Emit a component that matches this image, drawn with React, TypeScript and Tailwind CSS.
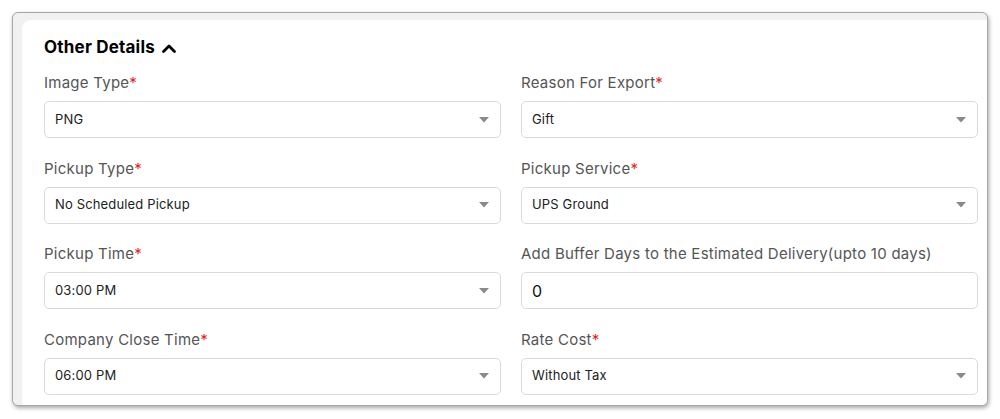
import React from "react";

const Caret = () => (
  <svg width="10" height="6" viewBox="0 0 10 6" className="shrink-0">
    <path d="M0 0 L10 0 L5 5.5 Z" fill="#8a8a8a" />
  </svg>
);

type Field = { label: string; value: string; required?: boolean; input?: boolean };

const fields: Field[] = [
  { label: "Image Type", value: "PNG", required: true },
  { label: "Reason For Export", value: "Gift", required: true },
  { label: "Pickup Type", value: "No Scheduled Pickup", required: true },
  { label: "Pickup Service", value: "UPS Ground", required: true },
  { label: "Pickup Time", value: "03:00 PM", required: true },
  { label: "Add Buffer Days to the Estimated Delivery(upto 10 days)", value: "0", input: true },
  { label: "Company Close Time", value: "06:00 PM", required: true },
  { label: "Rate Cost", value: "Without Tax", required: true },
];

export default function App() {
  return (
    <div
      className="w-[1000px] h-[419px] bg-white pt-[12px] pl-[12px] pr-[12px] overflow-hidden"
      style={{ fontFamily: "Inter, 'Noto Sans', sans-serif" }}
    >
      <div className="h-[394px] rounded-[6px] border border-[#a8a8a8] bg-[#f1f1f1] pl-[9px] pt-[7px] shadow-[1px_2px_4px_rgba(0,0,0,0.35)] overflow-hidden">
        <div className="h-full bg-white rounded-tl-[9px] pl-[22px] pr-[9px] pt-[15px]">
          <div className="flex items-center gap-[6px] h-[26px]">
            <span className="text-[17px] font-bold text-black tracking-[0.2px]">Other Details</span>
            <svg width="16" height="11" viewBox="0 0 16 11" className="mt-[1px]">
              <path d="M2.5 8.5 L8 3 L13.5 8.5" fill="none" stroke="#000" strokeWidth="2.8" strokeLinecap="round" strokeLinejoin="round" />
            </svg>
          </div>
          <div className="grid grid-cols-2 gap-x-[20px] gap-y-[19.5px] mt-[11px]">
            {fields.map((f) => (
              <div key={f.label} className="flex flex-col">
                <div className="h-[20px] leading-[20px] mt-[1px] text-[15px] text-[#555] tracking-[0.25px] whitespace-nowrap">
                  {f.label}
                  {f.required && <span className="text-[#e8231b]">*</span>}
                </div>
                <div className="mt-[8px] h-[37px] rounded-[5px] border border-[#dadada] bg-white flex items-center justify-between pl-[10px] pr-[11px]">
                  {f.input ? (
                    <span className="text-[16px] text-[#111]">{f.value}</span>
                  ) : (
                    <>
                      <span className="text-[13px] text-[#222] tracking-[0.15px]">{f.value}</span>
                      <Caret />
                    </>
                  )}
                </div>
              </div>
            ))}
          </div>
        </div>
      </div>
    </div>
  );
}
